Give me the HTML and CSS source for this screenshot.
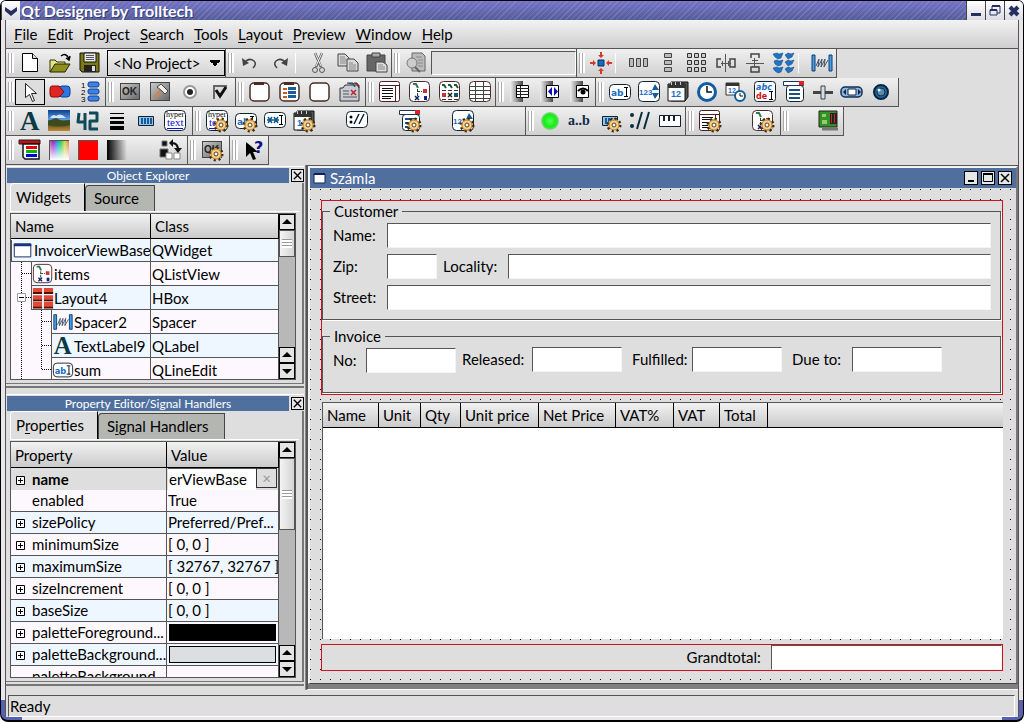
FILE: index.html
```html
<!DOCTYPE html>
<html lang="en">
<head>
    <meta charset="UTF-8">
    <meta name="viewport" content="width=device-width, initial-scale=1.0">
    <title>Qt Designer by Trolltech</title>
    <link rel="stylesheet" href="styles.css">
</head>
<body>
    <!-- Gradients shared by the icons -->
    <svg class="gradients" aria-hidden="true">
        <defs>
            <linearGradient id="g-rainbow"><stop offset="0" stop-color="#888"/><stop offset=".2" stop-color="#b0c"/><stop offset=".4" stop-color="#09d"/><stop offset=".6" stop-color="#2c5"/><stop offset=".8" stop-color="#cd3"/><stop offset="1" stop-color="#e66"/></linearGradient>
            <linearGradient id="g-white" x2="0" y2="1"><stop offset="0" stop-color="#fff" stop-opacity="0"/><stop offset="1" stop-color="#fff"/></linearGradient>
            <linearGradient id="g-black"><stop offset="0" stop-color="#000"/><stop offset="1" stop-color="#000" stop-opacity="0"/></linearGradient>
            <linearGradient id="g-sky" x2="0" y2="1"><stop offset="0" stop-color="#0c3f8c"/><stop offset=".45" stop-color="#5b9be0"/><stop offset=".55" stop-color="#3b3a20"/><stop offset="1" stop-color="#c08a30"/></linearGradient>
            <linearGradient id="g-grey" x2="1" y2="1"><stop offset="0" stop-color="#ccc"/><stop offset="1" stop-color="#666"/></linearGradient>
            <linearGradient id="g-door"><stop offset="0" stop-color="#f0f0f0"/><stop offset="1" stop-color="#444"/></linearGradient>
            <radialGradient id="g-led"><stop offset="0" stop-color="#5f5"/><stop offset=".7" stop-color="#1e1"/><stop offset="1" stop-color="#9c9"/></radialGradient>
        </defs>
    </svg>

    <!-- Icon set -->
    <svg class="sprite" aria-hidden="true">
        <symbol id="gear" viewBox="0 0 24 24">
            <circle cx="16" cy="16" r="6" fill="#f3c67c" stroke="#3a2a10" stroke-width="3" stroke-dasharray="2 2.7"/>
            <circle cx="16" cy="16" r="5" fill="#f6cf8c" stroke="#b8803a"/>
            <circle cx="16" cy="16" r="2" fill="#fff" stroke="#5a4010"/>
        </symbol>
        <symbol id="new" viewBox="0 0 24 24"><path d="M4.500 2.500h10l5 5v13h-15z" fill="#fff" stroke="#000"/><path d="M14.500 2.500v5h5" fill="#ddd" stroke="#000"/></symbol>
        <symbol id="open" viewBox="0 0 24 24"><path d="M2 21V9h5l2 2h8v3" fill="#e4e48a" stroke="#333300"/><path d="M2 21l5-8h15l-5 8z" fill="#8f8f1c" stroke="#222200"/><path d="M13 5q5-4 8 3m-3-1l3 2 1-4" fill="none" stroke="#000" stroke-width="1.5"/></symbol>
        <symbol id="save" viewBox="0 0 24 24"><path d="M2 2h19v19H4l-2-2z" fill="#7a7a10" stroke="#111"/><path d="M6 2h12v9H6z" fill="#e8e8e8" stroke="#111"/><path d="M8 4.500h8M8 6.500h8M8 8.500h8" stroke="#555"/><path d="M6 14h12v7H6z" fill="#222"/><path d="M14 15h3v5h-3z" fill="#ddd"/></symbol>
        <symbol id="undo" viewBox="0 0 24 24"><path d="M6 12q5-6 10-2 3 3-1 7" fill="none" stroke="#444" stroke-width="1.5"/><path d="M4 7l1 8 6-3z" fill="#444"/></symbol>
        <symbol id="redo" viewBox="0 0 24 24"><path d="M18 12q-5-6-10-2-3 3 1 7" fill="none" stroke="#444" stroke-width="1.5"/><path d="M20 7l-1 8-6-3z" fill="#444"/></symbol>
        <symbol id="cut" viewBox="0 0 24 24"><path d="M8 2l6 14M15 2L9 16" stroke="#666" stroke-width="2.5" fill="none"/><path d="M8 2l6 13M15 2L9 15" stroke="#eee" fill="none"/><circle cx="8" cy="19" r="2.500" fill="none" stroke="#555"/><circle cx="15" cy="19" r="2.500" fill="none" stroke="#555"/></symbol>
        <symbol id="copy" viewBox="0 0 24 24"><g fill="#d8d8d8" stroke="#444"><path d="M2 3h7l4 4v8H2z"/><path d="M11 8h7l4 4v8H11z"/></g><path d="M4 6h5M4 8h6M4 10h6M4 12h6M13 12h4M13 14h7M13 16h7M13 18h7" stroke="#888"/></symbol>
        <symbol id="paste" viewBox="0 0 24 24"><path d="M2 4h18v16H2z" fill="#666" stroke="#444"/><path d="M7 2h8v4H7z" fill="#aaa" stroke="#444"/><path d="M11 11h7l4 3v7H11z" fill="#ddd" stroke="#444"/><path d="M13 14h5M13 16h7M13 18h7" stroke="#888"/></symbol>
        <symbol id="find" viewBox="0 0 24 24"><path d="M8 2h10l3 3v15H8z" fill="#bbb" stroke="#666"/><path d="M12 6h6M14 9h5M14 12h5M14 15h5" stroke="#888"/><circle cx="8" cy="12" r="5" fill="#ccc" stroke="#777"/><path d="M11 16l5 5" stroke="#666" stroke-width="2"/></symbol>
        <symbol id="adjust" viewBox="0 0 24 24"><path d="M9 9h6v6H9z" fill="#126cc0" stroke="#04305c"/><path d="M9 4h6l-3 3zM9 20h6l-3-3zM4 9v6l3-3zM20 9v6l-3-3z" fill="#d43a2a"/><path d="M12 1v4M12 19v4M1 12h4M19 12h4" stroke="#d43a2a" stroke-width="2"/></symbol>
        <symbol id="hbox" viewBox="0 0 24 24"><path d="M2.500 7.500h4v8h-4zM9.500 7.500h4v8h-4zM16.500 7.500h4v8h-4z" fill="#bbb" stroke="#444"/></symbol>
        <symbol id="vbox" viewBox="0 0 24 24"><path d="M8.500 2.500h7v4h-7zM8.500 9.500h7v4h-7zM8.500 16.500h7v4h-7z" fill="#bbb" stroke="#444"/></symbol>
        <symbol id="grid" viewBox="0 0 24 24"><path d="M2.500 2.500h4v4h-4zM9.500 2.500h4v4h-4zM16.500 2.500h4v4h-4zM2.500 9.500h4v4h-4zM9.500 9.500h4v4h-4zM16.500 9.500h4v4h-4zM2.500 16.500h4v4h-4zM9.500 16.500h4v4h-4zM16.500 16.500h4v4h-4z" fill="#ccc" stroke="#333"/></symbol>
        <symbol id="hsplit" viewBox="0 0 24 24"><path d="M7 8H3v8h4M16 8h5v8h-5z" fill="none" stroke="#444" stroke-width="1.5"/><path d="M11.500 3v18M7 12.500h10M8.500 10v5M14.500 10v5" fill="none" stroke="#555"/></symbol>
        <symbol id="vsplit" viewBox="0 0 24 24"><path d="M8 7V3h8v4M8 16v5h8v-5z" fill="none" stroke="#444" stroke-width="1.5"/><path d="M3 12.500h18M11.500 7v10M9 9.500h6M9 15.500h6" fill="none" stroke="#555"/></symbol>
        <symbol id="break" viewBox="0 0 24 24"><path d="M1 3l4-1 2 1 4-1-2 5-3 1-3-2zM13 4l3-2 3 1 3-1-2 4-4 2zM2 10l3-1 2 1 4-1-2 5-3 1-3-2zM13 11l3-2 3 1 3-1-2 4-4 2zM1 17l4-1 2 1 4-1-2 5-3 1-3-2zM13 18l3-2 3 1 3-1-2 4-4 2z" fill="#1f74c4" stroke="#0a3f78" stroke-width=".5"/></symbol>
        <symbol id="spacer" viewBox="0 0 24 24"><path d="M2 4h3v16H2zM19 4h3v16h-3z" fill="#4a9ae0" stroke="#0c3f75"/><path d="M6 15l3-7-1 8 4-8-1 8 4-8-1 8 4-7" fill="none" stroke="#456"/></symbol>
        <symbol id="pointer" viewBox="0 0 24 24"><path d="M7.500 3.500v14l4-3 3 7 2-1-3-7h5z" fill="#fff" stroke="#222"/></symbol>
        <symbol id="connect" viewBox="0 0 24 24"><rect x="11" y="6" width="11" height="11" rx="3" fill="#2c77e0" stroke="#0a3f9c"/><path d="M4 6h7l5 6-5 5H4q-2 0-2-3V9q0-3 2-3z" fill="#e02525" stroke="#8c0a0a"/></symbol>
        <symbol id="taborder" viewBox="0 0 24 24"><g fill="#3d82e4" stroke="#0c3c94"><rect x="10" y="2" width="11" height="5" rx="2"/><rect x="10" y="9" width="11" height="5" rx="2"/><rect x="10" y="16" width="11" height="5" rx="2"/></g><g font-family="Liberation Sans, sans-serif" font-size="8" fill="#000"><text x="3" y="8">1</text><text x="3" y="15">2</text><text x="3" y="22">3</text></g></symbol>
        <symbol id="ok" viewBox="0 0 24 24"><rect x="2.500" y="3.500" width="19" height="16" fill="url(#g-grey)" stroke="#444"/><text x="4" y="15" font-family="Liberation Sans, sans-serif" font-size="10" font-weight="bold" fill="#222">OK</text></symbol>
        <symbol id="tool" viewBox="0 0 24 24"><rect x="2.500" y="2.500" width="19" height="18" fill="url(#g-grey)" stroke="#444"/><path d="M6 18l8-9" stroke="#c98755" stroke-width="3"/><path d="M9 7l4-3 7 7-3 3-3-3z" fill="#eee" stroke="#444"/></symbol>
        <symbol id="radio" viewBox="0 0 24 24"><circle cx="12" cy="12" r="6" fill="#fff" stroke="#999" stroke-width="2"/><circle cx="12" cy="12" r="3" fill="#222"/></symbol>
        <symbol id="check" viewBox="0 0 24 24"><path d="M6 6h13v13H6z" fill="#ddd"/><path d="M19 6H6v13" fill="none" stroke="#666" stroke-width="2"/><path d="M8 10l4 6 6-9" fill="none" stroke="#111" stroke-width="3"/></symbol>
        <symbol id="group" viewBox="0 0 24 24"><rect x="2" y="3" width="19" height="18" rx="4" fill="#fff" stroke="#4b2b22" stroke-width="1.5"/><path d="M6 2h10v3H6z" fill="#4b2b22"/></symbol>
        <symbol id="bgroup" viewBox="0 0 24 24"><rect x="2" y="3" width="19" height="18" rx="4" fill="#fff" stroke="#4b2b22" stroke-width="1.5"/><path d="M6 2h10v3H6z" fill="#4b2b22"/><path d="M5 8h4v2H5zM5 12h4v2H5zM5 16h4v2H5z" fill="#c65a1a"/><path d="M10 7h8v3h-8zM10 11h8v3h-8zM10 15h8v3h-8z" fill="#1a5f98"/></symbol>
        <symbol id="frame" viewBox="0 0 24 24"><rect x="2" y="3" width="19" height="18" rx="4" fill="#fff" stroke="#4b2b22" stroke-width="1.5"/></symbol>
        <symbol id="tabs" viewBox="0 0 24 24"><path d="M2 8h3l2-3h14v16H2z" fill="#c8ccd4" stroke="#333"/><path d="M9 3h6l2 4" fill="#3b77b8" stroke="#333"/><path d="M16 3h3l2 5" fill="#d33" stroke="#333"/><path d="M5 11h6M5 14h6M5 17h14" stroke="#555"/><path d="M13 10l5 5m0-5l-5 5" stroke="#b22" stroke-width="1.5"/></symbol>
        <symbol id="listbox" viewBox="0 0 24 24"><rect x="1.500" y="1.500" width="20" height="20" rx="2" fill="#fff" stroke="#4b2020"/><path d="M2 5.500h20M17.500 5v17" stroke="#4b2020"/><path d="M4 8.500h11M4 10.500h11M4 13.500h11M4 16.500h11M4 18.500h9" stroke="#111"/></symbol>
        <symbol id="listview" viewBox="0 0 24 24"><rect x="1.500" y="1.500" width="20" height="20" rx="4" fill="#fff" stroke="#4b2b2b"/><path d="M5 4h3l2 4" fill="none" stroke="#375" stroke-width="2"/><path d="M9.500 9v8M9 11.500h5" fill="none" stroke="#333" stroke-dasharray="3 1"/><path d="M15 9h4v4h-4z" fill="#c33"/><path d="M7 16l4 4m0-4l-4 4" stroke="#126" stroke-width="1.5"/><path d="M16 16h3v4h-3z" fill="#128"/></symbol>
        <symbol id="iconview" viewBox="0 0 24 24"><rect x="1.500" y="1.500" width="20" height="20" rx="4" fill="#fff" stroke="#4b2b2b"/><path d="M4 5h2l2 3M10 5h2l2 3M16 5h2l2 3" fill="none" stroke="#253" stroke-width="2"/><path d="M4 13h4v4H4z" fill="#c33"/><path d="M10 13l4 4m0-4l-4 4" stroke="#222" stroke-width="1.5"/><path d="M16 13h4v4h-4z" fill="#157"/><path d="M4 10.500h4M10 10.500h4M16 10.500h4M4 19.500h4M10 19.500h4M16 19.500h4" stroke="#333"/></symbol>
        <symbol id="tableicon" viewBox="0 0 24 24"><rect x="1.500" y="1.500" width="21" height="20" rx="4" fill="#fff" stroke="#4b2b2b"/><path d="M1 6.500h21M1 10.500h21M1 14.500h21M1 18.500h21M7.500 2v20M15.500 2v20" stroke="#444"/></symbol>
        <symbol id="datatable" viewBox="0 0 24 24"><path d="M2 1h13v21H2z" fill="url(#g-door)"/><path d="M8.500 5.500h12v12h-12z" fill="#fff" stroke="#000"/><path d="M9 8.500h12M9 11.500h12M9 14.500h12M12.500 6v12" stroke="#222"/></symbol>
        <symbol id="databrowser" viewBox="0 0 24 24"><path d="M2 1h13v21H2z" fill="url(#g-door)"/><path d="M8.500 5.500h12v12h-12z" fill="#fff" stroke="#000"/><path d="M14 7v9l-4-4.500zM16 7v9l4-4.500z" fill="#1010b0"/></symbol>
        <symbol id="dataview" viewBox="0 0 24 24"><path d="M2 1h13v21H2z" fill="url(#g-door)"/><path d="M8.500 5.500h12v12h-12z" fill="#fff" stroke="#000"/><path d="M10 11q5-5 10 0" fill="none" stroke="#000" stroke-width="2"/><circle cx="15" cy="12" r="2.500" fill="#000"/></symbol>
        <symbol id="lineedit" viewBox="0 0 24 24"><rect x="1.500" y="4.500" width="21" height="15" rx="4" fill="#fff" stroke="#123"/><text x="3" y="16" font-family="DejaVu Sans, sans-serif" font-size="9" font-weight="bold" fill="#1a6cc4">ab</text><path d="M16 7.500h4M18.500 8v9M16 16.500h4" stroke="#000"/></symbol>
        <symbol id="spinbox" viewBox="0 0 24 24"><rect x="1.500" y="1.500" width="21" height="20" rx="4" fill="#fff" stroke="#123"/><text x="2" y="15" font-family="Liberation Sans, sans-serif" font-size="8" font-weight="bold" fill="#1a6cc4">123</text><path d="M15 10l3-6 4 6zM15 13l3 6 4-6z" fill="#135c9c"/></symbol>
        <symbol id="dateedit" viewBox="0 0 24 24"><path d="M5 2h17v15l-3 4H5z" fill="#555" stroke="#111"/><path d="M2 4h17v17H2z" fill="#fff" stroke="#111"/><path d="M2 4h17v4H2z" fill="#333"/><path d="M5.500 2v3M9.500 2v3M14.500 2v3" stroke="#ccc"/><text x="5" y="17" font-family="Liberation Sans, sans-serif" font-size="9" font-weight="bold" fill="#1a6cc4">12</text></symbol>
        <symbol id="clock" viewBox="0 0 24 24"><circle cx="12" cy="12" r="8.500" fill="#fff" stroke="#0f5ca4" stroke-width="3"/><path d="M12 6v6h5" fill="none" stroke="#111" stroke-width="1.5"/></symbol>
        <symbol id="datetime" viewBox="0 0 24 24"><path d="M2 3h13v12H2z" fill="#fff" stroke="#333"/><path d="M2 3h13v3H2z" fill="#333"/><text x="4" y="13" font-family="Liberation Sans, sans-serif" font-size="7" font-weight="bold" fill="#1a6cc4">12</text><circle cx="16" cy="16" r="5" fill="#fff" stroke="#0f5c9c" stroke-width="2"/><path d="M16 13v3h3" fill="none" stroke="#111"/></symbol>
        <symbol id="textedit" viewBox="0 0 24 24"><rect x="1.500" y="1.500" width="21" height="20" rx="3" fill="#fff" stroke="#123"/><g font-family="DejaVu Sans, sans-serif" font-size="8" font-weight="bold"><text x="3" y="10" font-style="italic" fill="#1a6cc4">abc</text><text x="3" y="19" fill="#d01010">de</text></g><path d="M16 11.500h4M18.500 12v8M16 19.500h4" stroke="#000"/></symbol>
        <symbol id="combo" viewBox="0 0 24 24"><rect x="4.500" y="5.500" width="17" height="16" rx="3" fill="#fff" stroke="#123"/><path d="M1.500 1.500h20v4h-20z" fill="#fff" stroke="#235"/><path d="M17 1h5v4h-5z" fill="#d22"/><path d="M7 10h11M7 14h11M7 18h11" stroke="#1a4f80" stroke-width="2"/></symbol>
        <symbol id="slider" viewBox="0 0 24 24"><path d="M2 11h20v3H2z" fill="#444"/><path d="M10 6h4v13h-4z" fill="#ddd" stroke="#345"/></symbol>
        <symbol id="scroll" viewBox="0 0 24 24"><rect x="1" y="7" width="21" height="10" rx="4" fill="#8fb8dc" stroke="#0c2f55" stroke-width="1.5"/><path d="M8 9h8v6H8z" fill="#fff" stroke="#124"/><path d="M6 9v6l-3-3zM18 9v6l3-3z" fill="#124"/></symbol>
        <symbol id="dial" viewBox="0 0 24 24"><circle cx="12" cy="12" r="7" fill="#2466a0" stroke="#0a2440" stroke-width="2"/><circle cx="12" cy="12" r="4" fill="#5f8aaa" stroke="#0b2c4c"/><circle cx="10" cy="10" r="1.500" fill="#dff"/></symbol>
        <symbol id="label" viewBox="0 0 24 24"><text x="2" y="21" font-family="Liberation Serif, serif" font-size="27" font-weight="bold" fill="#0b3a44">A</text></symbol>
        <symbol id="pixmap" viewBox="0 0 24 24"><path d="M1 1h22v21H1z" fill="url(#g-sky)"/><path d="M3 9q3-5 6-2 5-4 10 2" fill="#cfe4f8"/><path d="M1 12l8-3 6 3 8-1v5q-12 3-22 0z" fill="#3c4a1c"/></symbol>
        <symbol id="lcd" viewBox="0 0 24 24"><path d="M3 4l-1 9h7M9 4v17M13 4h8v8h-7v8h8" fill="none" stroke="#0f4a58" stroke-width="3" stroke-linejoin="round"/></symbol>
        <symbol id="line" viewBox="0 0 24 24"><path d="M5 4.500h14" stroke="#000"/><path d="M5 9h14" stroke="#000" stroke-width="2"/><path d="M5 13.500h14" stroke="#000" stroke-width="3"/><path d="M5 19h14" stroke="#000" stroke-width="4"/></symbol>
        <symbol id="progress" viewBox="0 0 24 24"><path d="M4.500 7.500h15v9h-15z" fill="#8ec4ee" stroke="#123"/><path d="M8 9v6M11 9v6M14 9v6M17 9v6" stroke="#1a5a94" stroke-width="2"/></symbol>
        <symbol id="hyper" viewBox="0 0 24 24"><rect x="1.500" y="1.500" width="21" height="20" rx="4" fill="#fff" stroke="#123"/><g font-family="Liberation Serif, serif"><text x="3" y="8" font-size="8" fill="#000">hyper</text><text x="4" y="17" font-size="11" fill="#1010d0">text</text></g><path d="M4 19.500h16" stroke="#1010d0"/></symbol>
        <symbol id="password" viewBox="0 0 24 24"><rect x="1.500" y="3.500" width="21" height="15" rx="4" fill="#fff" stroke="#123"/><path d="M4 11h12M5 8l4 6m0-6l-4 6M11 8l4 6m0-6l-4 6" stroke="#0f5c94" stroke-width="1.5"/><path d="M16 6.500h4M18.500 7v9M16 15.500h4" stroke="#000"/></symbol>
        <symbol id="url" viewBox="0 0 24 24"><rect x="1.500" y="2.500" width="21" height="16" rx="4" fill="#fff" stroke="#123"/><circle cx="6" cy="8" r="1.500"/><circle cx="6" cy="13" r="1.500"/><path d="M9 15l5-10M14 15l5-10" stroke="#123" stroke-width="1.5"/></symbol>
        <symbol id="slashes" viewBox="0 0 24 24"><g fill="#0b2c3c"><circle cx="4" cy="6" r="2"/><circle cx="4" cy="17" r="2"/></g><path d="M9 20l5-17M16 20l5-17" stroke="#0b2c3c" stroke-width="2"/></symbol>
        <symbol id="led" viewBox="0 0 24 24"><circle cx="12" cy="12" r="9" fill="url(#g-led)"/></symbol>
        <symbol id="ab" viewBox="0 0 24 24"><text x="0" y="16" font-family="Liberation Serif, serif" font-size="14" font-weight="bold" fill="#0b2c4c">a..b</text></symbol>
        <symbol id="ruler" viewBox="0 0 24 24"><path d="M1.500 6.500h21v11h-21z" fill="#fff" stroke="#123"/><path d="M6 7v5M11 7v5M16 7v5" stroke="#123" stroke-width="2"/></symbol>
        <symbol id="board" viewBox="0 0 24 24"><path d="M2 2h18v16H2z" fill="#389028" stroke="#222"/><path d="M5 5h4v3H5zM5 11h5v4H5z" fill="#8ed070"/><path d="M13 4h7v11h-7z" fill="#222"/><path d="M14.500 5v9M17.500 5v9" stroke="#c22"/><path d="M5 20h16" stroke="#777" stroke-width="3"/></symbol>
        <symbol id="palette" viewBox="0 0 24 24"><path d="M1 2h21v4H1z" fill="#c01010" stroke="#222"/><path d="M5 6h16v15H7l-2-2z" fill="#fff" stroke="#111" stroke-width="1.5"/><path d="M8 9.500h11" stroke="#e00" stroke-width="3"/><path d="M8 13.500h11" stroke="#0b0" stroke-width="3"/><path d="M8 17.500h11" stroke="#00d" stroke-width="3"/></symbol>
        <symbol id="rainbow" viewBox="0 0 24 24"><path d="M2 2h20v20H2z" fill="url(#g-rainbow)"/><path d="M2 2h20v20H2z" fill="url(#g-white)"/><path d="M2.500 22V2.500H22" fill="none" stroke="#555"/></symbol>
        <symbol id="red" viewBox="0 0 24 24"><path d="M2 2h20v20H2z" fill="#f00"/><path d="M2.500 22V2.500H22" fill="none" stroke="#555"/></symbol>
        <symbol id="fade" viewBox="0 0 24 24"><path d="M2 2h20v20H2z" fill="url(#g-black)"/></symbol>
        <symbol id="swap" viewBox="0 0 24 24"><path d="M4 3h5v5H4zM2 11h8v8H2z" fill="#111" stroke="#777"/><path d="M8 15h6v6H8zM16 15h6v6h-6z" fill="#fff" stroke="#888"/><path d="M14 5q6 0 6 7" fill="none" stroke="#111" stroke-width="2"/><path d="M11 5l4-4v8zM16 10h8l-4 5z" fill="#111"/></symbol>
        <symbol id="whatsthis" viewBox="0 0 24 24"><path d="M4 4v15l4-4 3 7 3-1-3-7h5z" fill="#000"/><text x="12" y="15" font-family="DejaVu Sans, sans-serif" font-size="16" font-weight="bold" fill="#101080">?</text></symbol>
        <symbol id="layout" viewBox="0 0 24 24"><path d="M1 1h10v6H1zM13 1h10v6H13zM1 9h10v5H1zM13 9h10v5H13zM1 16h10v6H1zM13 16h10v6H13z" fill="#e04a34"/><path d="M1 6.500h10M13 6.500h10M1 14.500h10M13 14.500h10M1 22.500h10M13 22.500h10" stroke="#501008" stroke-width="2"/></symbol>
        <symbol id="form" viewBox="0 0 24 24"><path d="M2.500 5.500h18v14h-18z" fill="#fff" stroke="#10205c"/><path d="M2 5h19v3H2z" fill="#20307c"/></symbol>
        <symbol id="up" viewBox="0 0 14 14"><path d="M2 9l5-5 5 5z"/></symbol>
        <symbol id="down" viewBox="0 0 14 14"><path d="M2 5l5 5 5-5z"/></symbol>
        <symbol id="close" viewBox="0 0 12 12"><path d="M2 2l8 8M10 2l-8 8" stroke="#000" stroke-width="1.5"/></symbol>
        <symbol id="plus" viewBox="0 0 9 9"><path d="M.5 .5h8v8h-8z" fill="#fff" stroke="#000"/><path d="M4.500 2v5M2 4.500h5" stroke="#000"/></symbol>
        <symbol id="b-line" viewBox="0 0 20 24"><path d="M10.500 0v24" stroke="#000" stroke-dasharray="1 1"/></symbol>
        <symbol id="b-tee" viewBox="0 0 20 24"><path d="M10.500 0v24M11 11.500h9" stroke="#000" stroke-dasharray="1 1"/></symbol>
        <symbol id="b-end" viewBox="0 0 20 24"><path d="M10.500 0v12M11 11.500h9" stroke="#000" stroke-dasharray="1 1"/></symbol>
        <symbol id="b-minus" viewBox="0 0 20 24"><path d="M10.500 0v24M15 11.500h5" stroke="#000" stroke-dasharray="1 1"/><path d="M6.500 7.500h8v8h-8z" fill="#fff" stroke="#999"/><path d="M8 11.500h5" stroke="#000"/></symbol>
    </svg>

    <div class="window">
        <header class="titlebar">
            <button class="title-btn" aria-label="Window menu"><svg viewBox="0 0 16 16"><path d="M2 4l6 4 6-4v4l-6 5-6-5z" fill="#253060"/></svg></button>
            <h1>Qt Designer by Trolltech</h1>
            <button class="title-btn" aria-label="Minimize"><svg viewBox="0 0 16 16"><path d="M3 10h10v3H3z" fill="#253060"/></svg></button>
            <button class="title-btn" aria-label="Restore"><svg viewBox="0 0 16 16"><path d="M5 6V3h8v7h-3M3 7h7v5H3z" fill="none" stroke="#253060"/><path d="M5 3h8M3 7h7" stroke="#253060" stroke-width="2"/></svg></button>
            <button class="title-btn" aria-label="Close"><svg viewBox="0 0 16 16"><path d="M4 4l8 8M12 4l-8 8" stroke="#253060" stroke-width="4"/></svg></button>
        </header>

        <div class="client">
            <nav class="menubar">
                <a href="#"><u>F</u>ile</a>
                <a href="#"><u>E</u>dit</a>
                <a href="#">Pro<u>j</u>ect</a>
                <a href="#"><u>S</u>earch</a>
                <a href="#"><u>T</u>ools</a>
                <a href="#"><u>L</u>ayout</a>
                <a href="#"><u>P</u>review</a>
                <a href="#"><u>W</u>indow</a>
                <a href="#"><u>H</u>elp</a>
            </nav>

            <div class="toolrow">
                <div class="toolbar wide">
                    <button aria-label="New"><svg><use href="#new"/></svg></button>
                    <button aria-label="Open"><svg><use href="#open"/></svg></button>
                    <button aria-label="Save"><svg><use href="#save"/></svg></button>
                    <select class="project" aria-label="Project"><option>&lt;No Project&gt;</option></select>
                </div>
                <div class="toolbar wide">
                    <button aria-label="Undo"><svg><use href="#undo"/></svg></button>
                    <button aria-label="Redo"><svg><use href="#redo"/></svg></button>
                    <span class="sep"></span>
                    <button class="narrow" aria-label="Cut"><svg><use href="#cut"/></svg></button>
                    <button class="narrow" aria-label="Copy"><svg><use href="#copy"/></svg></button>
                    <button class="narrow" aria-label="Paste"><svg><use href="#paste"/></svg></button>
                </div>
                <div class="toolbar wide">
                    <button aria-label="Find"><svg><use href="#find"/></svg></button>
                    <input class="search" type="text" aria-label="Search text">
                </div>
                <div class="toolbar">
                    <button aria-label="Adjust size"><svg><use href="#adjust"/></svg></button>
                    <span class="sep"></span>
                    <button aria-label="Lay out horizontally"><svg><use href="#hbox"/></svg></button>
                    <button aria-label="Lay out vertically"><svg><use href="#vbox"/></svg></button>
                    <button aria-label="Lay out in a grid"><svg><use href="#grid"/></svg></button>
                    <button aria-label="Horizontal splitter"><svg><use href="#hsplit"/></svg></button>
                    <button aria-label="Vertical splitter"><svg><use href="#vsplit"/></svg></button>
                    <button aria-label="Break layout"><svg><use href="#break"/></svg></button>
                    <span class="sep"></span>
                    <button aria-label="Add spacer"><svg><use href="#spacer"/></svg></button>
                </div>
            </div>

            <div class="toolrow">
                <div class="toolbar wide">
                    <button class="pressed" aria-label="Pointer"><svg><use href="#pointer"/></svg></button>
                    <button aria-label="Connect signals"><svg><use href="#connect"/></svg></button>
                    <button aria-label="Tab order"><svg><use href="#taborder"/></svg></button>
                </div>
                <div class="toolbar wide">
                    <button aria-label="Push button"><svg><use href="#ok"/></svg></button>
                    <button aria-label="Tool button"><svg><use href="#tool"/></svg></button>
                    <button aria-label="Radio button"><svg><use href="#radio"/></svg></button>
                    <button aria-label="Check box"><svg><use href="#check"/></svg></button>
                </div>
                <div class="toolbar wide">
                    <button aria-label="Group box"><svg><use href="#group"/></svg></button>
                    <button aria-label="Button group"><svg><use href="#bgroup"/></svg></button>
                    <button aria-label="Frame"><svg><use href="#frame"/></svg></button>
                    <button aria-label="Tab widget"><svg><use href="#tabs"/></svg></button>
                </div>
                <div class="toolbar wide">
                    <button aria-label="List box"><svg><use href="#listbox"/></svg></button>
                    <button aria-label="List view"><svg><use href="#listview"/></svg></button>
                    <button aria-label="Icon view"><svg><use href="#iconview"/></svg></button>
                    <button aria-label="Table"><svg><use href="#tableicon"/></svg></button>
                </div>
                <div class="toolbar wide">
                    <button aria-label="Data table"><svg><use href="#datatable"/></svg></button>
                    <button aria-label="Data browser"><svg><use href="#databrowser"/></svg></button>
                    <button aria-label="Data view"><svg><use href="#dataview"/></svg></button>
                </div>
                <div class="toolbar last">
                    <button aria-label="Line edit"><svg><use href="#lineedit"/></svg></button>
                    <button aria-label="Spin box"><svg><use href="#spinbox"/></svg></button>
                    <button aria-label="Date edit"><svg><use href="#dateedit"/></svg></button>
                    <button aria-label="Time edit"><svg><use href="#clock"/></svg></button>
                    <button aria-label="Date time edit"><svg><use href="#datetime"/></svg></button>
                    <button aria-label="Text edit"><svg><use href="#textedit"/></svg></button>
                    <button aria-label="Combo box"><svg><use href="#combo"/></svg></button>
                    <button aria-label="Slider"><svg><use href="#slider"/></svg></button>
                    <button aria-label="Scroll bar"><svg><use href="#scroll"/></svg></button>
                    <button aria-label="Dial"><svg><use href="#dial"/></svg></button>
                </div>
            </div>

            <div class="toolrow">
                <div class="toolbar last">
                    <button aria-label="Text label"><svg><use href="#label"/></svg></button>
                    <button aria-label="Pixmap label"><svg><use href="#pixmap"/></svg></button>
                    <button aria-label="LCD number"><svg><use href="#lcd"/></svg></button>
                    <button aria-label="Line"><svg><use href="#line"/></svg></button>
                    <button aria-label="Progress bar"><svg><use href="#progress"/></svg></button>
                    <button aria-label="Text browser"><svg><use href="#hyper"/></svg></button>
                </div>
                <div class="toolbar">
                    <button aria-label="Custom browser"><svg><use href="#hyper"/><use href="#gear"/></svg></button>
                    <button aria-label="Custom edit"><svg><use href="#lineedit"/><use href="#gear"/></svg></button>
                    <button aria-label="Password edit"><svg><use href="#password"/></svg></button>
                    <button aria-label="Custom date"><svg><use href="#dateedit"/><use href="#gear"/></svg></button>
                    <span class="gap"></span>
                    <button aria-label="URL requester"><svg><use href="#url"/></svg></button>
                    <span class="gap"></span>
                    <button aria-label="Custom combo"><svg><use href="#combo"/><use href="#gear"/></svg></button>
                    <span class="gap"></span>
                    <button aria-label="Custom spin box"><svg><use href="#spinbox"/><use href="#gear"/></svg></button>
                    <span class="gap"></span><span class="gap"></span>
                </div>
                <div class="toolbar wide">
                    <button aria-label="LED"><svg><use href="#led"/></svg></button>
                    <button aria-label="Squeezed label"><svg><use href="#ab"/></svg></button>
                    <button aria-label="Custom progress"><svg><use href="#progress"/><use href="#gear"/></svg></button>
                    <button aria-label="URL label"><svg><use href="#slashes"/></svg></button>
                    <button aria-label="Ruler"><svg><use href="#ruler"/></svg></button>
                </div>
                <div class="toolbar last">
                    <button aria-label="Custom list box"><svg><use href="#listbox"/><use href="#gear"/></svg></button>
                    <span class="gap"></span>
                    <button aria-label="Custom list view"><svg><use href="#listview"/><use href="#gear"/></svg></button>
                </div>
                <div class="toolbar">
                    <span class="gap"></span>
                    <button aria-label="Part"><svg><use href="#board"/></svg></button>
                </div>
            </div>

            <div class="toolrow">
                <div class="toolbar last">
                    <button aria-label="Color combo"><svg><use href="#palette"/></svg></button>
                    <button aria-label="Hue selector"><svg><use href="#rainbow"/></svg></button>
                    <button aria-label="Color patch"><svg><use href="#red"/></svg></button>
                    <button aria-label="Gradient selector"><svg><use href="#fade"/></svg></button>
                    <span class="gap"></span>
                    <button aria-label="Dual color"><svg><use href="#swap"/></svg></button>
                </div>
                <div class="toolbar last">
                    <button aria-label="Custom button"><svg><use href="#ok"/><use href="#gear"/></svg></button>
                </div>
                <div class="toolbar">
                    <button aria-label="What's this?"><svg><use href="#whatsthis"/></svg></button>
                </div>
            </div>

            <main class="work">
                <aside class="docks">
                    <section class="dock explorer">
                        <div class="dock-title"><h2>Object Explorer</h2><button aria-label="Close Object Explorer"><svg><use href="#close"/></svg></button></div>
                        <div class="dock-body">
                            <div class="tabs" role="tablist">
                                <button class="tab active" role="tab" aria-selected="true">Widgets</button>
                                <button class="tab" role="tab">Source</button>
                            </div>
                            <div class="list">
                                <div class="list-view">
                                    <table class="tree">
                                        <colgroup><col class="tree-name"><col></colgroup>
                                        <thead><tr><th>Name</th><th>Class</th></tr></thead>
                                        <tbody>
                                            <tr class="root"><td><div class="node"><span><svg class="icon"><use href="#form"/></svg>InvoicerViewBase</span></div></td><td>QWidget</td></tr>
                                            <tr><td><div class="node"><svg class="branch"><use href="#b-tee"/></svg><span><svg class="icon"><use href="#listview"/></svg>items</span></div></td><td>QListView</td></tr>
                                            <tr><td><div class="node"><svg class="branch"><use href="#b-minus"/></svg><span><svg class="icon"><use href="#layout"/></svg>Layout4</span></div></td><td>HBox</td></tr>
                                            <tr><td><div class="node"><svg class="branch"><use href="#b-line"/></svg><svg class="branch"><use href="#b-tee"/></svg><span><svg class="icon"><use href="#spacer"/></svg>Spacer2</span></div></td><td>Spacer</td></tr>
                                            <tr><td><div class="node"><svg class="branch"><use href="#b-line"/></svg><svg class="branch"><use href="#b-tee"/></svg><span><svg class="icon"><use href="#label"/></svg>TextLabel9</span></div></td><td>QLabel</td></tr>
                                            <tr><td><div class="node"><svg class="branch"><use href="#b-line"/></svg><svg class="branch"><use href="#b-end"/></svg><span><svg class="icon"><use href="#lineedit"/></svg>sum</span></div></td><td>QLineEdit</td></tr>
                                        </tbody>
                                    </table>
                                </div>
                                <div class="scrollbar">
                                    <button aria-label="Scroll up"><svg><use href="#up"/></svg></button>
                                    <div class="thumb small"></div>
                                    <div class="track"></div>
                                    <button aria-label="Page up"><svg><use href="#up"/></svg></button>
                                    <button aria-label="Scroll down"><svg><use href="#down"/></svg></button>
                                </div>
                            </div>
                        </div>
                    </section>

                    <section class="dock editor">
                        <div class="dock-title"><h2>Property Editor/Signal Handlers</h2><button aria-label="Close Property Editor"><svg><use href="#close"/></svg></button></div>
                        <div class="dock-body">
                            <div class="tabs" role="tablist">
                                <button class="tab active" role="tab" aria-selected="true">P<u>r</u>operties</button>
                                <button class="tab" role="tab">S<u>i</u>gnal Handlers</button>
                            </div>
                            <div class="list">
                                <div class="list-view">
                                    <table class="props">
                                        <colgroup><col class="prop-name"><col></colgroup>
                                        <thead><tr><th>Property</th><th>Value</th></tr></thead>
                                        <tbody>
                                            <tr class="current"><td><svg class="plus"><use href="#plus"/></svg>name</td><td><div class="edit"><input type="text" value="erViewBase" aria-label="name"><button aria-label="Reset">×</button></div></td></tr>
                                            <tr><td class="leaf">enabled</td><td>True</td></tr>
                                            <tr><td><svg class="plus"><use href="#plus"/></svg>sizePolicy</td><td>Preferred/Pref...</td></tr>
                                            <tr><td><svg class="plus"><use href="#plus"/></svg>minimumSize</td><td>[ 0, 0 ]</td></tr>
                                            <tr><td><svg class="plus"><use href="#plus"/></svg>maximumSize</td><td>[ 32767, 32767 ]</td></tr>
                                            <tr><td><svg class="plus"><use href="#plus"/></svg>sizeIncrement</td><td>[ 0, 0 ]</td></tr>
                                            <tr><td><svg class="plus"><use href="#plus"/></svg>baseSize</td><td>[ 0, 0 ]</td></tr>
                                            <tr><td><svg class="plus"><use href="#plus"/></svg>paletteForeground...</td><td><div class="swatch black"></div></td></tr>
                                            <tr><td><svg class="plus"><use href="#plus"/></svg>paletteBackground...</td><td><div class="swatch"></div></td></tr>
                                            <tr><td class="leaf">paletteBackground...</td><td></td></tr>
                                        </tbody>
                                    </table>
                                </div>
                                <div class="scrollbar">
                                    <button aria-label="Scroll up"><svg><use href="#up"/></svg></button>
                                    <div class="thumb"></div>
                                    <div class="track"></div>
                                    <button aria-label="Page up"><svg><use href="#up"/></svg></button>
                                    <button aria-label="Scroll down"><svg><use href="#down"/></svg></button>
                                </div>
                            </div>
                        </div>
                    </section>
                </aside>

                <div class="workspace">
                    <section class="subwindow">
                        <div class="sub-title">
                            <svg viewBox="0 0 14 12"><path d="M1 2h11v9H1z" fill="#fff" stroke="#10205c"/><path d="M1 2h11" stroke="#10205c" stroke-width="2"/></svg>
                            <h2>Számla</h2>
                            <button aria-label="Minimize form"><svg viewBox="0 0 12 12"><path d="M3 9h6" stroke="#000" stroke-width="2"/></svg></button>
                            <button aria-label="Maximize form"><svg viewBox="0 0 12 12"><path d="M1.500 2.500h9v7h-9z" fill="none" stroke="#000"/><path d="M1 2h10" stroke="#000" stroke-width="2"/></svg></button>
                            <button aria-label="Close form"><svg viewBox="0 0 12 12"><path d="M2 2l8 8M10 2l-8 8" stroke="#000" stroke-width="1.5"/></svg></button>
                        </div>
                        <form class="canvas">
                            <div class="layout-box">
                                <fieldset>
                                    <legend>Customer</legend>
                                    <div class="rows">
                                        <div class="row"><label class="first" for="c-name">Name:</label><input class="grow" id="c-name" type="text"></div>
                                        <div class="row"><label class="first" for="c-zip">Zip:</label><input class="zip" id="c-zip" type="text"><label class="locality" for="c-loc">Locality:</label><input class="grow" id="c-loc" type="text"></div>
                                        <div class="row"><label class="first" for="c-street">Street:</label><input class="grow" id="c-street" type="text"></div>
                                    </div>
                                </fieldset>
                                <fieldset class="invoice">
                                    <legend>Invoice</legend>
                                    <div class="row">
                                        <span class="pair number"><label for="i-no">No:</label><input id="i-no" type="text"></span>
                                        <span class="pair released"><label for="i-rel">Released:</label><input id="i-rel" type="text"></span>
                                        <span class="pair late"><label for="i-ful">Fulfilled:</label><input id="i-ful" type="text"></span>
                                        <span class="pair late"><label for="i-due">Due to:</label><input id="i-due" type="text"></span>
                                    </div>
                                </fieldset>
                            </div>
                            <div class="items">
                                <table>
                                    <colgroup><col class="c56"><col class="c42"><col class="c40"><col class="c78"><col class="c77"><col class="c58"><col class="c46"><col class="c48"><col></colgroup>
                                    <thead><tr><th>Name</th><th>Unit</th><th>Qty</th><th>Unit price</th><th>Net Price</th><th>VAT%</th><th>VAT</th><th>Total</th><th></th></tr></thead>
                                </table>
                            </div>
                            <div class="total">
                                <label for="sum">Grandtotal:</label>
                                <input id="sum" type="text">
                            </div>
                        </form>
                    </section>
                </div>
            </main>

            <footer class="status">Ready</footer>
        </div>
    </div>
</body>
</html>
```
FILE: styles.css
```css
* {
    box-sizing: border-box;
}
body {
    margin: 0;
    font-family: Lato, 'Open Sans', sans-serif;
    font-size: 15px;
    line-height: 20px;
    color: #000;
}
h1, h2 {
    margin: 0;
    font-weight: normal;
}
button, input, select {
    font: inherit;
    color: inherit;
    margin: 0;
    padding: 0;
    border-radius: 0;
}
svg {
    display: block;
    flex: none;
}
u {
    text-underline-offset: 2px;
}
table {
    width: 100%;
    border-collapse: separate;
    border-spacing: 0;
    table-layout: fixed;
}
.gradients {
    position: absolute;
    width: 0;
    height: 0;
}
.sprite {
    display: none;
}

/* main window */
.window {
    display: flex;
    flex-direction: column;
    height: 100vh;
    overflow: hidden;
    background:
        linear-gradient(#5860b0, #5860b0) 0 100% / 21px 20px no-repeat,
        linear-gradient(#5860b0, #5860b0) 100% 100% / 21px 20px no-repeat,
        #e8e6e8;
    border: 1px solid #000;
    border-bottom-width: 2px;
    border-radius: 6px 6px 8px 8px;
}
.titlebar {
    display: flex;
    flex: none;
    height: 19px;
    color: #fff;
    background: repeating-linear-gradient(135deg, rgba(255, 255, 255, 0.12) 0 1px, transparent 1px 4px), linear-gradient(#7474c8, #545c98);
}
.titlebar h1 {
    flex: 1;
    padding-left: 1px;
    font-size: 16px;
    font-weight: bold;
    text-shadow: 1px 1px #333a70;
}
.title-btn {
    display: flex;
    align-items: center;
    justify-content: center;
    width: 19px;
    border: 0;
    border-left: 1px solid #444;
    background: linear-gradient(#fff, #dcdce4);
}
.title-btn svg {
    width: 16px;
    height: 16px;
}
.client {
    display: flex;
    flex: 1;
    flex-direction: column;
    min-height: 0;
    margin: 0 4px 3px 4px;
    border-left: 1px solid #555;
    border-right: 1px solid #555;
    background: #dedede;
}
.menubar {
    display: flex;
    flex: none;
    align-items: center;
    gap: 10px;
    height: 29px;
    padding-left: 8px;
    border-bottom: 1px solid #555;
    background: linear-gradient(#f2f2f2, #cfcfcf);
}
.menubar a {
    color: #000;
    text-decoration: none;
}

/* toolbars */
.toolrow {
    display: flex;
    flex: none;
    height: 29px;
}
.toolbar {
    display: flex;
    align-items: center;
    padding-left: 9px;
    border-right: 1px solid #555;
    border-bottom: 1px solid #555;
    background:
        repeating-linear-gradient(90deg, #aaa 0 1px, #fff 1px 3px) 2px 4px / 6px 20px no-repeat,
        linear-gradient(#f0f0f0, #d0d0d0);
}
.toolbar.last {
    padding-right: 3px;
}
.toolbar button {
    display: flex;
    align-items: center;
    justify-content: center;
    width: 29px;
    height: 28px;
    border: 0;
    background: none;
}
.toolbar.wide button {
    width: 30px;
}
.toolbar.wide button.narrow {
    width: 29px;
}
.toolbar button.pressed {
    height: 26px;
    border: 1px solid #000;
    background: #dedede;
}
.toolbar svg {
    width: 24px;
    height: 24px;
}
.sep {
    width: 9px;
    height: 20px;
    border-left: 1px solid #fff;
}
.gap {
    width: 24px;
}
.project {
    width: 118px;
    height: 26px;
    margin-left: 2px;
    padding-left: 5px;
    border: 1px solid #000;
    appearance: none;
    background:
        linear-gradient(45deg, transparent 50%, #000 50%) 101px 9px / 6px 6px no-repeat,
        linear-gradient(-45deg, transparent 50%, #000 50%) 107px 9px / 6px 6px no-repeat,
        linear-gradient(#f0f0f0, #d4d4d4);
}
.search {
    width: 145px;
    height: 24px;
    border: 1px solid #fff;
    border-top-color: #555;
    border-left-color: #555;
    background: #dedede;
}

/* docks */
.work {
    display: flex;
    flex: 1;
    min-height: 0;
}
.docks {
    display: flex;
    flex: none;
    flex-direction: column;
    gap: 6px;
    width: 300px;
    padding: 1px 1px 4px 0;
    border-right: 1px solid #888;
}
.dock {
    display: flex;
    flex-direction: column;
    min-height: 0;
    border-top: 1px solid #fff;
    border-bottom: 2px solid #777;
}
.explorer {
    flex: 0 0 222px;
}
.editor {
    flex: 1;
}
.dock-title {
    display: flex;
    flex: none;
    align-items: center;
    gap: 2px;
    height: 16px;
    margin-left: 1px;
}
.dock-title h2 {
    flex: 1;
    height: 15px;
    color: #fff;
    font-size: 12px;
    line-height: 15px;
    text-align: center;
    background: #4f709f;
}
.dock-title button {
    width: 13px;
    height: 13px;
    border: 1px solid #000;
    background: #e8e8e8;
}
.dock-title svg {
    width: 11px;
    height: 11px;
}
.dock-body {
    display: flex;
    flex: 1;
    flex-direction: column;
    min-height: 0;
    margin-bottom: 2px;
    padding: 1px 3px 3px 4px;
    border-right: 2px solid #777;
    border-bottom: 1px solid #777;
}
.tabs {
    display: flex;
    flex: none;
    align-items: flex-end;
    height: 28px;
    border-bottom: 1px solid #fff;
}
.tab {
    height: 26px;
    padding: 0 15px 2px 8px;
    border: 1px solid #444;
    border-width: 1px 1px 0 1px;
    border-radius: 4px 0 0 0;
    background: #b4b6b2;
}
.tab.active {
    height: 28px;
    padding: 0 13px 2px 5px;
    border-color: #fff #000 #dedede #fff;
    background: #dedede;
}
.list {
    display: flex;
    flex: 1;
    min-height: 0;
    margin: 1px 3px 0 0;
    border: 1px solid #555;
    background: #fdf8fd;
}
.list-view {
    flex: 1;
    min-width: 0;
    overflow: hidden;
}
th {
    height: 25px;
    padding: 0 0 0 4px;
    border-right: 1px solid #000;
    border-bottom: 1px solid #000;
    font-weight: normal;
    text-align: left;
    white-space: nowrap;
    background: linear-gradient(#f2f2f2, #cacaca);
}
.list td {
    padding: 0 0 0 1px;
    border-right: 1px solid #555;
    border-bottom: 1px solid #555;
    white-space: nowrap;
    overflow: hidden;
}
.tree-name {
    width: 140px;
}
.tree td {
    height: 24px;
    line-height: 22px;
}
.tree .root td {
    height: 22px;
}
.tree td:first-child {
    padding: 0;
    border-bottom: 0;
}
.tree tr:nth-child(odd) td:last-child,
.tree tr:nth-child(odd) .node > span {
    background: #eef6ff;
}
.node {
    display: flex;
    height: 24px;
}
.root .node {
    height: 22px;
}
.node > span {
    display: flex;
    flex: 1;
    align-items: center;
    min-width: 0;
    border-left: 1px solid #555;
    border-bottom: 1px solid #555;
}
.icon {
    width: 22px;
    height: 22px;
}
.branch {
    width: 20px;
    height: 24px;
}
.prop-name {
    width: 156px;
}
.props th {
    height: 26px;
}
.props td {
    height: 22px;
    line-height: 21px;
}
.list .props td:first-child {
    padding-left: 5px;
}
.list .props .leaf:first-child {
    padding-left: 21px;
}
.props tr:nth-child(odd) td {
    background: #eef6ff;
}
.props tr.current td {
    border-bottom: 0;
    background: #dedede;
}
.current td:first-child {
    font-weight: bold;
}
.plus {
    display: inline-block;
    width: 9px;
    height: 9px;
    margin-right: 7px;
}
.edit {
    display: flex;
    height: 22px;
}
.edit input {
    flex: 1;
    min-width: 0;
    padding-left: 1px;
    border: 0;
    border-top: 1px solid #555;
    background: #fff;
}
.edit button {
    width: 21px;
    height: 20px;
    margin-right: 1px;
    border: 1px solid #333;
    color: #999;
    line-height: 16px;
    background: #dedede;
}
.swatch {
    height: 17px;
    margin: 0 2px 0 1px;
    border: 1px solid #000;
    background: #dcdfdf;
}
.swatch.black {
    background: #000;
}
.scrollbar {
    display: flex;
    flex: none;
    flex-direction: column;
    width: 16px;
    background: #b8b8b8;
}
.scrollbar button {
    flex: none;
    height: 16px;
    border: 1px solid #000;
    background: #e4e4e4;
}
.scrollbar svg {
    width: 14px;
    height: 14px;
}
.thumb {
    flex: none;
    height: 72px;
    border: 1px solid #555;
    background:
        repeating-linear-gradient(#999 0 1px, #fff 1px 3px) center / 10px 9px no-repeat,
        linear-gradient(90deg, #f4f4f4, #d4d4d4);
}
.thumb.small {
    height: 27px;
}
.track {
    flex: 1;
}

/* form window */
.workspace {
    display: flex;
    flex: 1;
    min-width: 0;
    padding-bottom: 5px;
    border-left: 2px solid #555;
    border-top: 1px solid #555;
    border-bottom: 1px solid #fff;
    background: #808080;
}
.subwindow {
    display: flex;
    flex: 1;
    flex-direction: column;
    min-width: 0;
    border: 2px solid #f4f4f4;
    border-right-color: #777;
    border-bottom: 1px solid #444;
}
.sub-title {
    display: flex;
    flex: none;
    align-items: center;
    gap: 3px;
    height: 20px;
    padding: 0 4px 0 3px;
    color: #fff;
    background: #4f709f;
}
.sub-title > svg {
    width: 14px;
    height: 12px;
}
.sub-title h2 {
    flex: 1;
    font-size: 15px;
}
.sub-title button {
    width: 14px;
    height: 14px;
    border: 1px solid #000;
    background: #e6e8e8;
}
.sub-title button svg {
    width: 12px;
    height: 12px;
}
.canvas {
    display: flex;
    flex: 1;
    flex-direction: column;
    min-height: 0;
    padding: 12px 13px 12px 11px;
    background:
        linear-gradient(transparent 1px, #dedede 1px) 0 1px / 10px 10px,
        linear-gradient(90deg, #000 1px, #dedede 1px) 0 1px / 10px 10px;
}
.canvas label {
    padding-bottom: 1px;
}
.canvas input {
    width: 90px;
    min-width: 0;
    height: 25px;
    border: 1px solid #f4f4f4;
    border-top-color: #555;
    border-left-color: #555;
    background: #fff;
}
.layout-box {
    flex: none;
    border: 1px solid #d01020;
    background: #dedede;
}
fieldset {
    margin: 0 1px 0 0;
    padding: 2px 9px 9px 10px;
    border: 1px solid #555;
    box-shadow: 1px 1px #fff;
}
fieldset.invoice {
    margin: 6px 1px 1px 0;
    padding: 0 9px 19px 10px;
}
legend {
    margin-left: -3px;
    padding: 0 4px;
    background: #dedede;
}
.rows {
    display: grid;
    gap: 6px;
}
.row, .pair {
    display: flex;
    align-items: center;
}
.row .first {
    width: 54px;
}
.row .grow {
    flex: 1;
}
.row .zip {
    width: 50px;
}
.row .locality {
    width: 71px;
    padding-left: 6px;
}
.number {
    padding-top: 2px;
}
.pair label {
    width: 33px;
}
.released label {
    width: 76px;
    padding-left: 6px;
}
.late label {
    width: 70px;
    padding-left: 10px;
}
.items {
    flex: 1;
    min-height: 0;
    margin: 7px 0 5px 1px;
    border-top: 1px solid #555;
    border-left: 1px solid #555;
    background: #fff;
}
.items th:last-child {
    border-right: 0;
}
.c56 { width: 56px; }
.c42 { width: 42px; }
.c40 { width: 40px; }
.c78 { width: 78px; }
.c77 { width: 77px; }
.c58 { width: 58px; }
.c46 { width: 46px; }
.c48 { width: 48px; }
.total {
    display: flex;
    flex: none;
    align-items: center;
    justify-content: flex-end;
    gap: 10px;
    border: 1px solid #d01020;
    background: #dedede;
}
.total input {
    width: 34%;
}

.status {
    flex: none;
    height: 22px;
    margin: 5px 3px 0 2px;
    padding-left: 1px;
    border: 1px solid #fff;
    border-top-color: #555;
    border-left-color: #555;
}
```
